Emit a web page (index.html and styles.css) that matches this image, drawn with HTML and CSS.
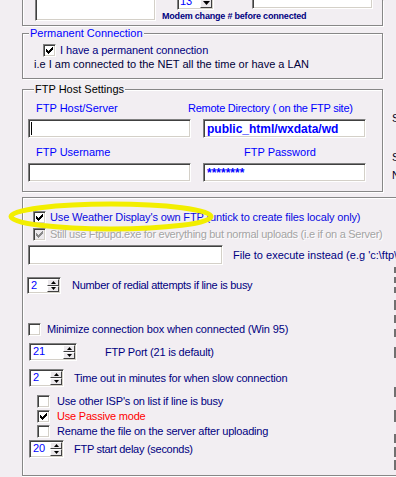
FILE: index.html
```html
<!DOCTYPE html>
<html>
<head>
<meta charset="utf-8">
<link rel="stylesheet" href="styles.css">
</head>
<body>
<div class="page">
  <div class="top-group">
    <div class="memo"></div>
    <div class="modem-col">
      <div class="modem-row">
        <div class="combo">
          <span class="combo-val">13</span>
          <span class="combo-btn"><svg width="7" height="4" viewBox="0 0 7 4"><path d="M0 0h7L3.5 4z" fill="#000"/></svg></span>
        </div>
        <div class="whitebox"></div>
      </div>
      <div class="modem-cap">Modem change # before connected</div>
    </div>
  </div>

  <fieldset class="group perm">
    <legend class="lg-blue">Permanent Connection</legend>
    <div class="row perm-chk">
      <span class="cb"><svg class="ck" viewBox="0 0 11 11"><path d="M2 4h1v3H2zM3 5h1v3H3zM4 6h1v3H4zM5 5h1v3H5zM6 4h1v3H6zM7 3h1v3H7zM8 2h1v3H8z" fill="#000"/></svg></span>
      <span class="txt navy">I have a permanent connection</span>
    </div>
    <div class="perm-note">i.e I am connected to the NET all the time or have a LAN</div>
  </fieldset>

  <div class="ftp-row">
    <fieldset class="group ftp">
      <legend class="lg-black">FTP Host Settings</legend>
      <div class="ftp-grid">
        <div class="lbl l-host">FTP Host/Server</div>
        <div class="lbl l-dir">Remote Directory ( on the FTP site)</div>
        <div class="field"><span class="caret"></span></div>
        <div class="field val">public_html/wxdata/wd</div>
        <div class="lbl l-user">FTP Username</div>
        <div class="lbl l-pass">FTP Password</div>
        <div class="field"></div>
        <div class="field val pw">********</div>
      </div>
    </fieldset>
    <div class="side">
      <div class="side-a">Server</div>
      <div class="side-b">Set</div>
      <div class="side-c">N</div>
    </div>
  </div>

  <div class="panel">
    <div class="panel-main">
      <div class="row r1">
        <span class="cb"><svg class="ck" viewBox="0 0 11 11"><path d="M2 4h1v3H2zM3 5h1v3H3zM4 6h1v3H4zM5 5h1v3H5zM6 4h1v3H6zM7 3h1v3H7zM8 2h1v3H8z" fill="#000"/></svg></span>
        <span class="txt blue">Use Weather Display's own FTP (untick to create files localy only)</span>
      </div>
      <div class="row r2">
        <span class="cb dis"><svg class="ck" viewBox="0 0 11 11"><path d="M2 4h1v3H2zM3 5h1v3H3zM4 6h1v3H4zM5 5h1v3H5zM6 4h1v3H6zM7 3h1v3H7zM8 2h1v3H8z" fill="#8a8a8a"/></svg></span>
        <span class="txt gray">Still use Ftpupd.exe for everything but normal uploads (i.e if on a Server)</span>
      </div>
      <div class="row r3">
        <div class="field exe"></div>
        <span class="txt navy">File to execute instead (e.g 'c:\ftp\ftpupd.exe')</span>
      </div>
      <div class="row r4">
        <div class="spin w34"><span class="spin-val">2</span><span class="spin-btns"><span class="sb up"><svg width="5" height="3" viewBox="0 0 5 3"><path d="M0 3h5L2.5 0z" fill="#000"/></svg></span><span class="sb dn"><svg width="5" height="3" viewBox="0 0 5 3"><path d="M0 0h5L2.5 3z" fill="#000"/></svg></span></span></div>
        <span class="txt navy">Number of redial attempts if line is busy</span>
      </div>
      <div class="row r5">
        <span class="cb"></span>
        <span class="txt navy">Minimize connection box when connected (Win 95)</span>
      </div>
      <div class="row r6">
        <div class="spin w48"><span class="spin-val">21</span><span class="spin-btns"><span class="sb up"><svg width="5" height="3" viewBox="0 0 5 3"><path d="M0 3h5L2.5 0z" fill="#000"/></svg></span><span class="sb dn"><svg width="5" height="3" viewBox="0 0 5 3"><path d="M0 0h5L2.5 3z" fill="#000"/></svg></span></span></div>
        <span class="txt navy">FTP Port (21 is default)</span>
      </div>
      <div class="row r7">
        <div class="spin w35"><span class="spin-val">2</span><span class="spin-btns"><span class="sb up"><svg width="5" height="3" viewBox="0 0 5 3"><path d="M0 3h5L2.5 0z" fill="#000"/></svg></span><span class="sb dn"><svg width="5" height="3" viewBox="0 0 5 3"><path d="M0 0h5L2.5 3z" fill="#000"/></svg></span></span></div>
        <span class="txt navy">Time out in minutes for when slow connection</span>
      </div>
      <div class="row r8">
        <span class="cb"></span>
        <span class="txt navy">Use other ISP's on list if line is busy</span>
      </div>
      <div class="row r9">
        <span class="cb"><svg class="ck" viewBox="0 0 11 11"><path d="M2 4h1v3H2zM3 5h1v3H3zM4 6h1v3H4zM5 5h1v3H5zM6 4h1v3H6zM7 3h1v3H7zM8 2h1v3H8z" fill="#000"/></svg></span>
        <span class="txt red">Use Passive mode</span>
      </div>
      <div class="row r10">
        <span class="cb"></span>
        <span class="txt navy">Rename the file on the server after uploading</span>
      </div>
      <div class="row r11">
        <div class="spin w35"><span class="spin-val">20</span><span class="spin-btns"><span class="sb up"><svg width="5" height="3" viewBox="0 0 5 3"><path d="M0 3h5L2.5 0z" fill="#000"/></svg></span><span class="sb dn"><svg width="5" height="3" viewBox="0 0 5 3"><path d="M0 0h5L2.5 3z" fill="#000"/></svg></span></span></div>
        <span class="txt navy">FTP start delay (seconds)</span>
      </div>
    </div>
    <div class="edge"></div>
  </div>

  <svg class="highlight" width="396" height="477" viewBox="0 0 396 477">
    <ellipse cx="111" cy="216.5" rx="100" ry="12.5" fill="none" stroke="#f2ee00" stroke-width="5"/>
  </svg>
</div>
</body>
</html>
```

FILE: styles.css
```css
* { box-sizing: border-box; }
html, body {
  margin: 0;
  padding: 0;
  width: 396px;
  height: 477px;
  overflow: hidden;
}
body {
  background: #f2eef2;
  font-family: "Liberation Sans", Arial, sans-serif;
  font-size: 11px;
  line-height: 13px;
  color: #000080;
}
.page {
  position: relative;
  width: 420px;
  height: 477px;
}

/* ---------- shared ---------- */
.navy { color: #000080; }
.blue { color: #0a0ae0; }
.red { color: #ff0000; }
.gray { color: #a4a4a4; text-shadow: 1px 1px 0 #ffffff; }

.row {
  display: flex;
  align-items: center;
  white-space: nowrap;
}

.cb {
  flex: none;
  width: 13px;
  height: 13px;
  background: #ffffff;
  border: 1px solid;
  border-color: #808080 #ffffff #ffffff #808080;
  box-shadow: inset 1px 1px 0 #404040, inset -1px -1px 0 #d4d0c8;
}
.cb.dis { background: #ece9ec; }
.ck {
  display: block;
  width: 11px;
  height: 11px;
  shape-rendering: crispEdges;
}

.field {
  flex: none;
  height: 19px;
  background: #ffffff;
  border: 1px solid;
  border-color: #808080 #ffffff #ffffff #808080;
  box-shadow: inset 1px 1px 0 #404040, inset -1px -1px 0 #d4d0c8;
  padding: 2px 2px 0 3px;
}
.field.val {
  color: #0000ff;
  font-weight: bold;
  font-size: 12px;
  line-height: 15px;
  padding-left: 3px;
}
.field.pw { line-height: 14px; }
.caret {
  display: block;
  width: 1px;
  height: 13px;
  background: #000;
  margin-left: -1px;
}

.spin {
  flex: none;
  display: flex;
  height: 17px;
  background: #ffffff;
  border: 1px solid;
  border-color: #808080 #ffffff #ffffff #808080;
  box-shadow: inset 1px 1px 0 #404040, inset -1px -1px 0 #d4d0c8;
  padding: 1px;
}
.w34 { width: 34px; }
.w35 { width: 35px; }
.w48 { width: 48px; }
.spin-val {
  flex: 1;
  color: #0000ff;
  padding-left: 2px;
  line-height: 13px;
}
.spin-btns {
  width: 12px;
  display: flex;
  flex-direction: column;
}
.sb {
  flex: 1;
  display: flex;
  align-items: center;
  justify-content: center;
  background: #ebe8eb;
  border: 1px solid;
  border-color: #ffffff #404040 #404040 #ffffff;
}
.sb svg { display: block; }

/* ---------- group boxes ---------- */
.group {
  margin: 0 0 0 22px;
  padding: 0;
  width: 361px;
  border: 1px solid #878787;
  box-shadow: inset 1px 1px 0 #ffffff, 1px 1px 0 #ffffff;
  min-width: 0;
}
.group legend {
  margin-left: 6px;
  padding: 0 1px;
  line-height: 13px;
  background: #f2eef2;
}
.lg-blue { color: #0000ff; }
.lg-black { color: #000000; }

/* ---------- top group ---------- */
.top-group {
  margin-left: 22px;
  width: 361px;
  height: 26px;
  border: 1px solid #878787;
  border-top: 0;
  box-shadow: inset 1px 0 0 #ffffff, 1px 1px 0 #ffffff;
  display: flex;
  padding-left: 12px;
}
.memo {
  width: 121px;
  height: 21px;
  background: #ffffff;
  border-left: 1px solid #808080;
  border-right: 1px solid #ffffff;
  border-bottom: 1px solid #ffffff;
  box-shadow: inset 1px 0 0 #404040, inset -1px -1px 0 #d4d0c8;
}
.modem-col {
  margin-left: 6px;
  display: flex;
  flex-direction: column;
}
.modem-row {
  display: flex;
  height: 10px;
}
.combo {
  margin-left: 15px;
  margin-top: -11px;
  width: 37px;
  height: 21px;
  display: flex;
  background: #ffffff;
  border: 1px solid;
  border-color: #808080 #ffffff #ffffff #808080;
  box-shadow: inset 1px 1px 0 #404040, inset -1px -1px 0 #d4d0c8;
  padding: 1px;
}
.combo-val {
  flex: 1;
  align-self: flex-end;
  color: #0000ff;
  padding-left: 1px;
  line-height: 13px;
}
.combo-btn {
  width: 12px;
  display: flex;
  align-items: flex-end;
  justify-content: center;
  padding-bottom: 2px;
  background: #ebe8eb;
  border: 1px solid;
  border-color: #ffffff #404040 #404040 #ffffff;
}
.combo-btn svg { display: block; }
.whitebox {
  margin-left: 38px;
  margin-top: -12px;
  width: 121px;
  height: 21px;
  background: #ffffff;
  border: 1px solid;
  border-color: #808080 #ffffff #ffffff #808080;
  box-shadow: inset 1px 1px 0 #404040, inset -1px -1px 0 #d4d0c8;
}
.modem-cap {
  margin-top: 1px;
  font-size: 9px;
  font-weight: bold;
  line-height: 10px;
  letter-spacing: -0.2px;
  color: #000080;
  white-space: nowrap;
}

/* ---------- permanent ---------- */
.perm {
  margin-top: 1px;
  padding-bottom: 7px;
}
.perm-chk {
  margin-top: 4px;
  margin-left: 20px;
  height: 13px;
}
.perm-chk .txt { margin-left: 4px; letter-spacing: -0.1px; }
.perm-note {
  margin-top: 1px;
  margin-left: 11px;
  color: #000038;
  white-space: nowrap;
}

/* ---------- ftp host ---------- */
.ftp-row {
  display: flex;
  margin-top: 4px;
}
.ftp {
  padding: 0 0 9px 5px;
  flex: none;
}
.ftp-grid {
  display: grid;
  grid-template-columns: 163px 163px;
  column-gap: 12px;
}
.lbl {
  color: #0000ff;
  white-space: nowrap;
}
.l-host { margin-top: 6px; margin-left: 8px; margin-bottom: 4px; }
.l-dir { margin-top: 6px; margin-left: -15px; letter-spacing: -0.25px; }
.l-user { margin-top: 8px; margin-left: 8px; margin-bottom: 4px; }
.l-pass { margin-top: 8px; margin-left: 41px; }

.side {
  margin-left: 9px;
  color: #000020;
  white-space: nowrap;
}
.side-a { margin-top: 29px; }
.side-b { margin-top: 26px; }
.side-c { margin-top: 5px; }

/* ---------- lower panel ---------- */
.panel {
  margin-top: 5px;
  margin-left: 22px;
  width: 380px;
  height: 279px;
  border: 1px solid #878787;
  border-right: 0;
  box-shadow: inset 1px 1px 0 #ffffff, 0 1px 0 #ffffff;
  display: flex;
}
.panel-main {
  width: 371px;
  flex: none;
}
.txt { white-space: nowrap; }
.panel .txt { letter-spacing: -0.2px; }

.r1 { margin-top: 13px; margin-left: 10px; height: 13px; }
.r1 .txt { margin-left: 4px; letter-spacing: -0.14px; }
.r2 { margin-top: 4px; margin-left: 10px; height: 13px; }
.r2 .txt { margin-left: 4px; letter-spacing: -0.28px; }
.r3 { margin-top: 4px; margin-left: 5px; height: 20px; }
.field.exe { width: 195px; height: 20px; }
.r3 .txt { margin-left: 10px; letter-spacing: 0; }
.r4 { margin-top: 12px; margin-left: 4px; height: 17px; }
.r4 .txt { margin-left: 11px; letter-spacing: -0.3px; }
.r5 { margin-top: 29px; margin-left: 5px; height: 13px; }
.r5 .txt { margin-left: 6px; letter-spacing: -0.15px; }
.r6 { margin-top: 7px; margin-left: 6px; height: 18px; }
.r6 .spin { height: 18px; }
.r6 .txt { margin-left: 28px; }
.r7 { margin-top: 8px; margin-left: 6px; height: 18px; }
.r7 .spin { height: 18px; }
.r7 .txt { margin-left: 10px; }
.r8 { margin-top: 8px; margin-left: 14px; height: 13px; }
.r8 .txt { margin-left: 7px; }
.r9 { margin-top: 2px; margin-left: 14px; height: 13px; }
.r9 .txt { margin-left: 7px; }
.r10 { margin-top: 2px; margin-left: 14px; height: 13px; }
.r10 .txt { margin-left: 7px; }
.r11 { margin-top: 2px; margin-left: 6px; height: 18px; }
.r11 .spin { height: 18px; }
.r11 .txt { margin-left: 10px; letter-spacing: -0.28px; }

.edge {
  width: 2px;
  height: 206px;
  margin-top: 68px;
  background: linear-gradient(to bottom,
    transparent 0, transparent 1px, #707070 1px, #707070 7px,
    transparent 7px, transparent 11px, #707070 11px, #707070 17px,
    transparent 17px, transparent 21px, #707070 21px, #707070 27px,
    transparent 27px, transparent 34px, #707070 34px, #707070 44px,
    transparent 44px, transparent 49px, #707070 49px, #707070 57px,
    transparent 57px, transparent 63px, #707070 63px, #707070 71px,
    transparent 71px, transparent 81px, #707070 81px, #707070 92px,
    transparent 92px, transparent 121px, #707070 121px, #707070 131px,
    transparent 131px, transparent 144px, #707070 144px, #707070 156px,
    transparent 156px, transparent 168px, #707070 168px, #707070 177px,
    transparent 177px, transparent 181px, #707070 181px, #707070 191px,
    transparent 191px, transparent 194px, #707070 194px, #707070 204px,
    transparent 204px);
}

.highlight {
  position: absolute;
  left: 0;
  top: 0;
  pointer-events: none;
}
```
